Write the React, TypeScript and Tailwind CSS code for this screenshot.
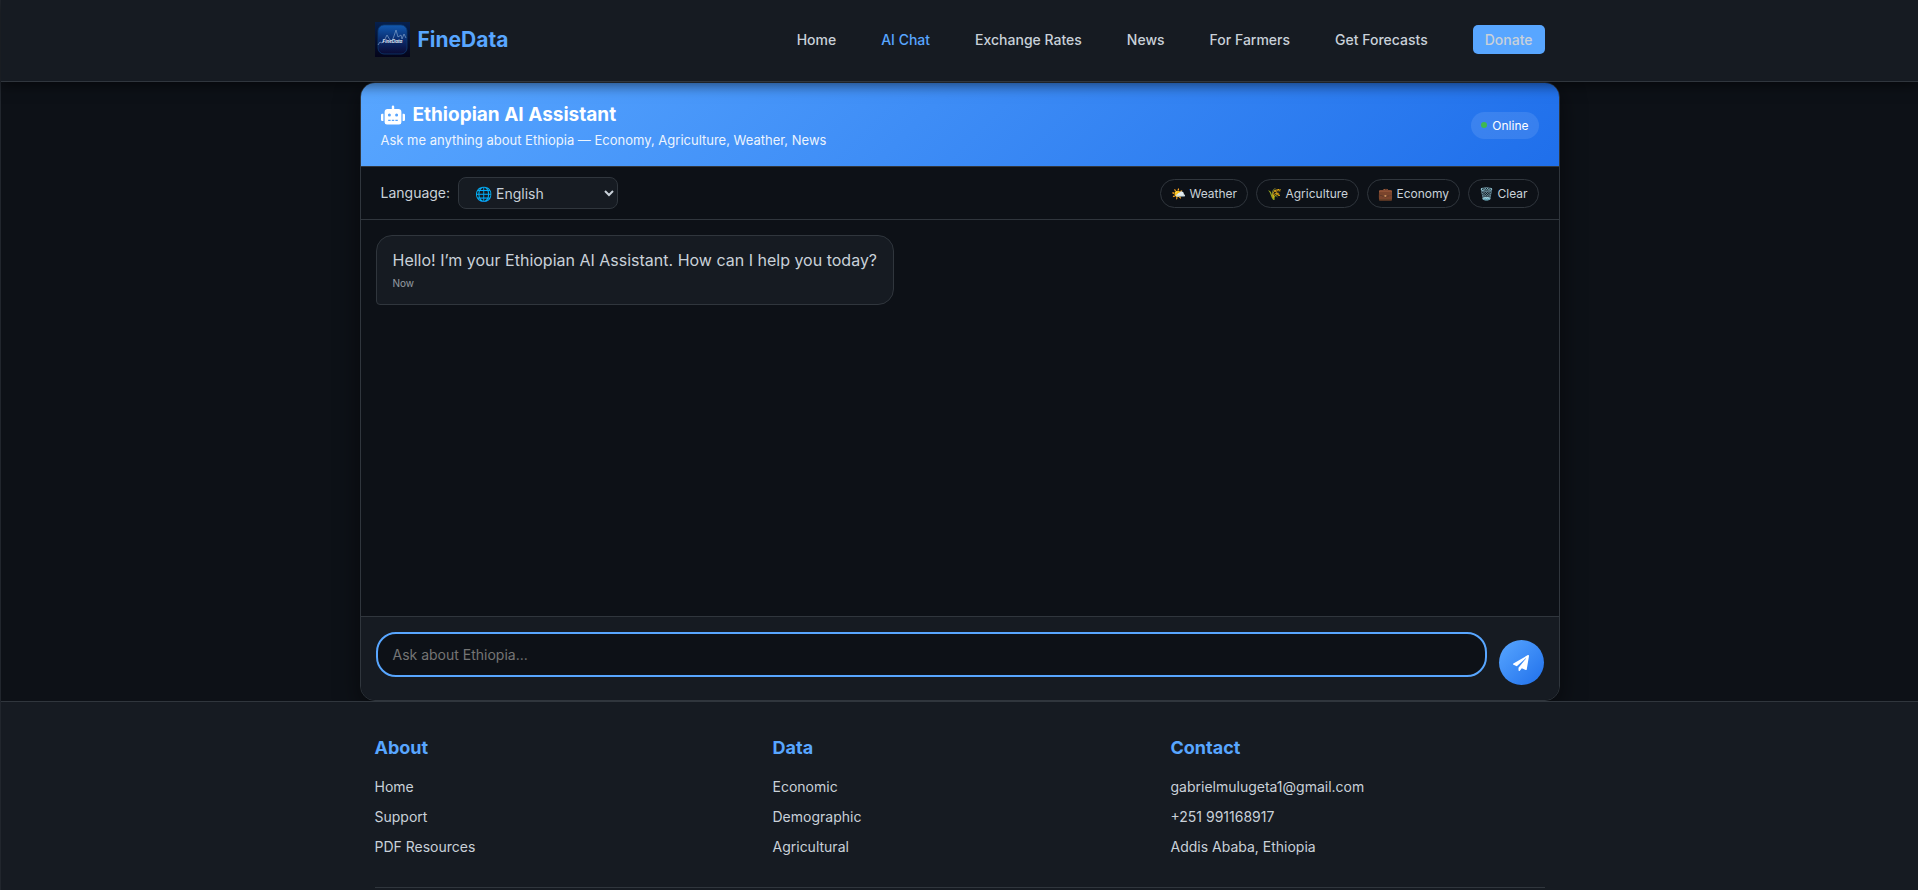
import { FaPaperPlane, FaRobot } from 'react-icons/fa';

const navLinks = ['Home', 'AI Chat', 'Exchange Rates', 'News', 'For Farmers', 'Get Forecasts'];

const quickActions = [
    { icon: '🌤️', label: 'Weather' },
    { icon: '🌾', label: 'Agriculture' },
    { icon: '💼', label: 'Economy' },
    { icon: '🗑️', label: 'Clear' },
];

const footerColumns = [
    { title: 'About', items: ['Home', 'Support', 'PDF Resources'] },
    { title: 'Data', items: ['Economic', 'Demographic', 'Agricultural'] },
    { title: 'Contact', items: ['gabrielmulugeta1@gmail.com', '+251 991168917', 'Addis Ababa, Ethiopia'] },
];

function Logo() {
    return (
        <svg viewBox="0 0 35 35" className="size-[35px]" aria-hidden="true">
            <defs>
                <linearGradient id="logo-back" x1="0" y1="0" x2="0" y2="1">
                    <stop offset="0" stopColor="#06204d" />
                    <stop offset="1" stopColor="#04041a" />
                </linearGradient>
                <linearGradient id="logo-tile" x1="0" y1="0" x2="0" y2="1">
                    <stop offset="0" stopColor="#1259b0" />
                    <stop offset="0.5" stopColor="#0a2d70" />
                    <stop offset="1" stopColor="#0b0b33" />
                </linearGradient>
            </defs>
            <rect width="35" height="35" fill="url(#logo-back)" />
            <rect x="3" y="3" width="29" height="29" rx="6" fill="url(#logo-tile)" stroke="#0d3a70" strokeWidth="0.8" />
            <path
                d="M3 23l2-3 2 1 3-4 2-4 3 5 2 1 2-5 2-6 2 7 3-2 1 4 2-5 2 4"
                fill="none"
                stroke="#7f9fc8"
                strokeWidth="0.7"
            />
            <text
                x="17.5"
                y="20.5"
                textAnchor="middle"
                fontSize="4.5"
                fontWeight="700"
                fontStyle="italic"
                fill="#e4ecf6"
            >
                FineData
            </text>
        </svg>
    );
}

function Header() {
    return (
        <header className="relative z-10 border-b border-[#30363d] bg-[#161b22] shadow-[0_4px_12px_rgba(0,0,0,0.5)]">
            <div className="mx-auto flex max-w-[1200px] items-center justify-between px-[15px] pt-[22px] pb-6">
                <a href="#" className="flex items-center gap-2 text-[21px] leading-[35px] font-bold text-[#58a6ff]">
                    <Logo />
                    FineData
                </a>
                <nav className="flex items-center gap-[45px] text-[14px] font-medium">
                    {navLinks.map((link) => (
                        <a key={link} href="#" className={link === 'AI Chat' ? 'text-[#58a6ff]' : ''}>
                            {link}
                        </a>
                    ))}
                    <a href="#" className="rounded-[5px] bg-[#58a6ff] px-3 py-1 leading-[21px]">
                        Donate
                    </a>
                </nav>
            </div>
        </header>
    );
}

function ChatHeader() {
    return (
        <div className="flex items-center justify-between border-b border-[#30363d] bg-linear-135 from-[#58a6ff] to-[#1f6feb] px-5 pt-4 pb-[15px] text-white">
            <div>
                <h1 className="flex items-center gap-2 text-[19px] leading-[31px] font-bold">
                    <FaRobot className="size-6" />
                    Ethiopian AI Assistant
                </h1>
                <p className="text-[13px] leading-[21px] opacity-90">
                    Ask me anything about Ethiopia — Economy, Agriculture, Weather, News
                </p>
            </div>
            <div className="flex items-center gap-[5px] rounded-[15px] bg-white/10 px-[10px] py-1 text-[12px] leading-[19px]">
                <span className="size-[6px] rounded-full bg-[#3fb950]" />
                Online
            </div>
        </div>
    );
}

function Toolbar() {
    return (
        <div className="flex items-center justify-between border-b border-[#30363d] px-5 py-[10px]">
            <div className="flex items-center gap-2 text-[14px]">
                <label htmlFor="language" className="pb-[2px]">
                    Language:
                </label>
                <select
                    id="language"
                    className="h-8 w-40 rounded-lg border border-[#30363d] bg-[#161b22] px-3 text-[14px]"
                >
                    <option>🌐 English</option>
                    <option>🌐 Amharic</option>
                </select>
            </div>
            <div className="flex gap-2">
                {quickActions.map(({ icon, label }) => (
                    <button
                        key={label}
                        type="button"
                        className="rounded-[15px] border border-[#30363d] px-[10px] py-1 text-[12px] leading-[19px]"
                    >
                        {icon} {label}
                    </button>
                ))}
            </div>
        </div>
    );
}

function MessageForm() {
    return (
        <form className="flex items-end gap-3 border-t border-[#30363d] bg-[#161b22] p-[15px]">
            <div className="flex-1 pb-2">
                <textarea
                    rows={1}
                    aria-label="Message"
                    placeholder="Ask about Ethiopia..."
                    className="block h-[45px] w-full resize-none rounded-[20px] border-2 border-[#58a6ff] bg-[#0d1117] px-[15px] py-[10px] text-[14px] leading-[21px] outline-none placeholder:text-[#757575]"
                />
            </div>
            <button
                type="submit"
                aria-label="Send"
                className="flex size-[45px] items-center justify-center rounded-full bg-linear-135 from-[#58a6ff] to-[#1f6feb] text-white"
            >
                <FaPaperPlane className="size-4" />
            </button>
        </form>
    );
}

function Footer() {
    return (
        <footer className="border-t border-[#30363d] bg-[#161b22] pt-[31px]">
            <div className="mx-auto max-w-[1200px] px-[15px]">
                <div className="grid grid-cols-3 gap-6 pb-[29px]">
                    {footerColumns.map(({ title, items }) => (
                        <div key={title}>
                            <h2 className="mb-[14px] text-[18px] leading-[29px] font-bold text-[#58a6ff]">{title}</h2>
                            <ul className="flex flex-col gap-2 text-[14px] leading-[22px]">
                                {items.map((item) => (
                                    <li key={item}>
                                        <a href="#">{item}</a>
                                    </li>
                                ))}
                            </ul>
                        </div>
                    ))}
                </div>
                <div className="border-t border-[#30363d] pt-[2px]" />
            </div>
        </footer>
    );
}

export default function App() {
    return (
        <div className="flex min-h-screen flex-col border-l border-[#21262d] bg-[#0d1117] font-['Inter',sans-serif] text-[#c9d1d9]">
            <Header />
            <main className="mx-auto flex w-full max-w-[1200px] flex-1 flex-col overflow-hidden rounded-[15px] border border-[#30363d] bg-[#0d1117] shadow-[0_8px_24px_rgba(0,0,0,0.5)]">
                <ChatHeader />
                <Toolbar />
                <div className="flex flex-1 flex-col items-start p-[15px]">
                    <div className="rounded-2xl rounded-bl-[4px] border border-[#30363d] bg-[#161b22] px-4 pt-3 pb-[11px]">
                        <p className="text-[16px] leading-[25px]">
                            Hello! I’m your Ethiopian AI Assistant. How can I help you today?
                        </p>
                        <p className="text-[10px] leading-5 opacity-70">Now</p>
                    </div>
                </div>
                <MessageForm />
            </main>
            <Footer />
        </div>
    );
}
